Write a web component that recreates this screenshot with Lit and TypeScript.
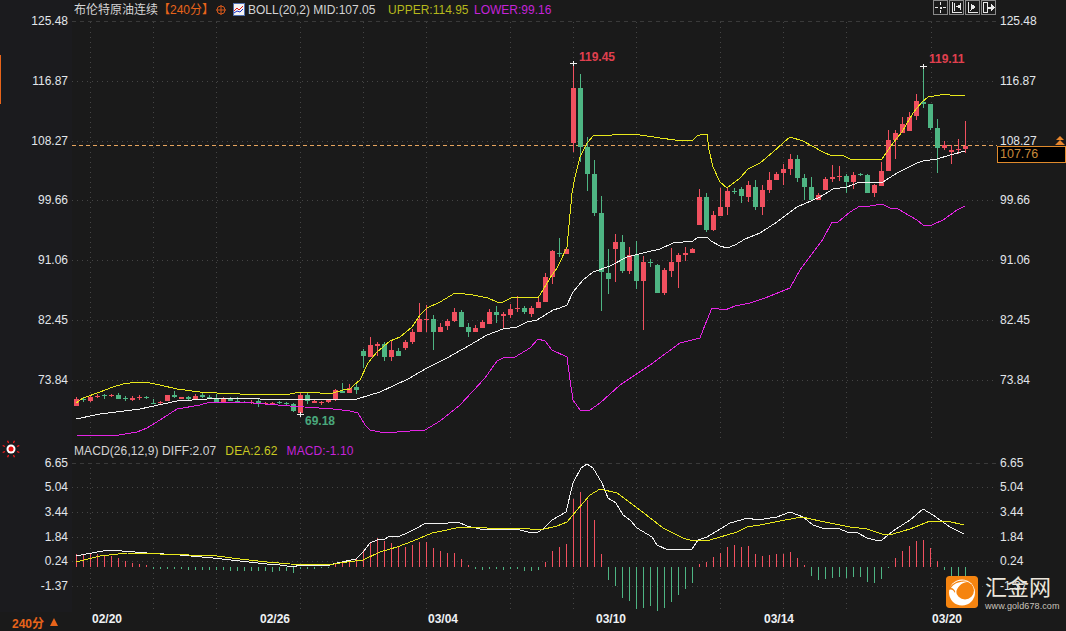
import { LitElement, html, css, svg } from "lit";
import { customElement } from "lit/decorators.js";

type C = number[];
const early: C[] = [
  [57,77,50,77,1],[57,60,52,65,0],[50,62,45,66,1],[47,49,43,54,1],[45,48,43,58,0],[46,48,42,52,1],[46,57,38,57,0],[53,58,48,62,0],[53,59,47,62,1],[50,52,44,59,1],
  [50,54,47,57,0],[70,72,57,72,0],[65,70,62,71,1],[46,62,45,63,1],[45,52,33,55,0],[52,58,50,58,1],[52,57,48,60,0],[48,58,42,60,1],[45,52,37,55,0],[50,53,45,58,0],
  [53,66,42,68,0],[56,66,52,67,1],[56,62,50,64,0],[62,65,52,68,0],[65,68,62,70,0],[65,70,60,72,1],[62,72,58,80,0],[68,71,65,73,1],[68,70,66,72,1],[67,69,63,72,0],
  [68,70,65,75,0],[72,94,68,96,0],[45,100,40,105,1],[45,64,40,73,0],[62,68,60,69,1],[67,70,62,75,1],[60,67,58,68,1],[30,60,26,62,1],[32,38,10,40,0],[25,38,12,40,1],
].map((c) => [380 + c[0] / 3, 380 + c[1] / 3, 380 + c[2] / 3, 380 + c[3] / 3, c[4]]);

const rest: C[] = [
  [387,390,384,394,0],[351,356,349,368,0],[345,357,337,357,1],[344,346,342,356,1],[344,357,342,361,0],[350,357,341,361,1],[351,356,348,356,0],[342,348,340,350,1],[332,342,329,344,1],[319,332,303,332,1],
  [319,320,305,332,1],[319,332,315,350,0],[327,332,323,332,1],[321,326,319,330,1],[312,321,308,322,1],[312,327,310,327,0],[327,332,323,337,0],[328,332,325,332,1],[322,328,320,328,1],[312,324,309,324,1],
  [312,315,306,323,0],[314,316,312,328,1],[309,315,304,318,1],[308,309,296,312,1],[308,312,306,314,0],[308,314,306,317,1],[302,308,296,308,1],[277,302,273,302,1],[251,277,250,284,1],[253,254,238,257,0],
  [249,254,249,254,1],[88,143,64,152,1],[88,147,74,162,0],[147,174,137,191,0],[174,213,160,216,0],[213,272,196,311,0],[273,279,249,294,0],[242,249,234,282,1],[242,271,235,273,0],[255,271,247,274,1],
  [255,281,241,289,0],[262,281,256,330,1],[262,263,259,267,0],[265,293,264,293,0],[270,293,268,295,1],[262,271,248,277,1],[255,262,253,288,1],[253,255,247,261,1],[249,253,248,253,1],[197,225,189,225,1],
  [197,230,193,232,0],[215,230,211,231,1],[207,216,188,216,1],[191,207,187,215,1],[191,192,188,194,0],[189,196,187,203,0],[185,197,181,202,1],[187,207,180,210,0],[190,207,185,215,1],[180,190,172,193,1],
  [174,180,172,180,1],[169,173,164,185,1],[159,169,154,175,1],[159,178,155,182,0],[178,187,174,200,0],[187,200,177,201,0],[195,200,193,200,1],[179,190,177,190,1],[177,179,165,182,1],[176,177,166,181,1],
  [176,182,174,193,0],[175,182,172,189,1],[174,175,173,176,0],[175,193,174,193,0],[185,193,184,197,1],[171,186,162,186,1],[140,171,130,171,1],[133,140,130,159,1],[124,133,117,133,1],[117,131,112,131,1],
  [101,116,94,120,1],[102,104,66,108,0],[104,128,104,130,0],[128,148,119,173,0],[145,148,141,150,1],[150,152,145,164,1],[149,150,139,154,1],[146,149,121,153,1],
];
const candles = [...early, ...rest];

const upper = "76,403 83,398 100,392 113,387 123,384 137,382 150,383 160,385 177,389 200,392 217,393 240,394 267,395 290,394 300,392 320,393 333,393 343,390 350,389 353,386 360,380 368,363 377,352 390,341 400,337 412,327 420,315 427,308 440,302 455,293 465,294 473,295 488,298 497,302 503,302 513,297 523,297 538,298 543,290 550,278 557,268 560,262 567,247 572,193 575,177 580,157 587,143 594,135 612,135 613,134 633,134 647,136 660,138 675,140 693,140 697,136 703,134 707,134 709,150 713,167 720,182 727,188 740,178 748,169 760,163 773,152 783,143 790,137 803,141 823,152 832,156 842,155 850,159 882,159 893,143 902,132 913,113 922,102 928,97 940,95 947,94 950,95 965,95";
const mid = "76,419 100,414 140,409 163,404 177,401 207,399 233,398 260,399 287,399 333,400 357,399 380,392 408,379 427,368 447,358 470,345 487,335 503,329 517,327 527,322 537,320 553,310 560,308 567,305 573,292 583,280 593,272 610,266 627,257 647,252 660,249 673,243 693,241 697,238 707,237 711,241 720,246 727,248 735,245 745,239 760,233 777,222 797,207 820,197 833,189 847,187 860,182 883,182 897,173 917,163 923,161 937,159 950,155 965,151";
const lower = "76,435 113,436 137,432 147,428 160,420 177,409 200,405 210,402 240,402 290,406 333,409 350,411 358,413 365,425 370,430 385,433 410,431 425,430 440,421 460,405 485,378 497,361 503,358 515,357 530,348 538,339 545,341 552,350 567,357 570,380 573,400 580,410 590,410 600,403 620,385 650,365 680,343 700,338 705,325 712,308 725,310 735,306 750,303 765,298 790,288 800,270 815,250 823,239 832,222 838,222 850,212 860,206 870,206 882,204 890,208 898,209 917,220 923,225 932,225 943,220 957,210 965,206";
const diff = "76,556 97,552 110,550 147,553 180,555 213,558 240,561 267,564 280,565 293,567 300,565 330,565 337,563 356,559 363,552 370,543 377,540 385,539 390,536 400,536 407,533 417,528 426,523 448,523 453,522 458,522 467,526 480,529 493,529 520,530 528,532 538,532 543,529 552,520 566,512 573,483 581,468 587,464 593,468 602,483 608,498 616,503 623,515 630,520 637,528 652,537 657,545 668,550 692,549 698,540 707,537 730,523 748,518 757,520 777,517 790,512 803,517 813,525 822,528 840,529 847,532 858,533 867,538 875,540 882,540 893,531 910,520 923,509 933,515 950,527 964,534";
const dea = "76,562 100,556 127,553 160,554 217,556 240,559 267,562 290,564 327,565 347,562 363,560 380,552 397,547 413,541 432,533 447,530 460,527 470,527 487,528 520,528 540,530 557,526 567,522 577,510 590,495 600,489 617,493 640,510 663,528 683,538 693,541 710,540 737,532 747,527 760,525 780,521 802,517 820,521 850,527 867,529 882,534 893,534 910,529 930,521 947,521 964,525";

const macd = [
  554,554,553,554,555,556,558,561,563,564,565,
  569,569,569,569,569,570,570,570,570,570,570,571,571,571,571,571,571,572,571,
  571,573,569,569,569,568,568,
  563,562,561,559,550,542,538,541,543,547,547,545,542,542,548,551,553,553,559,565,
  569,570,569,569,570,569,569,571,571,570,
  562,551,547,544,499,492,500,520,554,
  580,586,598,601,609,608,606,611,608,602,595,589,583,
  564,562,557,553,547,545,547,546,554,556,555,554,554,552,558,565,
  576,580,579,578,577,578,577,577,582,583,579,568,
  558,551,546,541,540,548,561,
  570,577,577,577,
];

const RED = "#f0505f";
const GREEN = "#4eb583";
const ZERO = 566;
const px = (i: number) => 76 + 7 * i;

const priceLabels: [string, number][] = [["125.48",21],["116.87",81],["108.27",141],["99.66",200],["91.06",260],["82.45",320],["73.84",380]];
const macdLabels: [string, number][] = [["6.65",463],["5.04",487],["3.44",512],["1.84",537],["0.24",561],["-1.37",586]];
const verticals = [90,153,216,300,363,426,510,573,636,720,783,846,931];
const dates: [string, number][] = [["02/20",107],["02/26",275],["03/04",443],["03/10",611],["03/14",779],["03/20",947]];
const crosses: [number, number][] = [[573,63],[923,66],[300,414]];

@customElement("app-root")
export class AppRoot extends LitElement {
  static styles = css`
    :host {
      display: block;
      width: 1066px;
      height: 631px;
      overflow: hidden;
      background: #1a1a1a;
      font-family: "Liberation Sans", "Noto Sans CJK SC", sans-serif;
      font-size: 12px;
      color: #d4d4d4;
    }
    .chart { position: relative; height: 612px; }
    .plot { display: block; }
    .axis { font-size: 12px; fill: #e2e6ea; }
    .extreme { font-size: 12px; font-weight: 700; }
    .line { fill: none; stroke-width: 1; shape-rendering: crispEdges; }
    .crisp { shape-rendering: crispEdges; }
    .legend {
      position: absolute;
      display: flex;
      align-items: center;
      white-space: nowrap;
      line-height: 16px;
      left: 74px;
    }
    .legend.price { top: 2px; }
    .legend.osc { top: 443px; gap: 9px; letter-spacing: 0.1px; }
    .title { width: 84px; }
    .period { color: #e8641a; margin-left: 0; width: 56px; }
    .target { margin-left: 2px; }
    .boll-icon { margin: -2px 3px 0 7px; }
    .mid { width: 131px; }
    .up { color: #b5b81c; margin-left: 9px; width: 77px; }
    .down { color: #c424d8; margin-left: 9px; }
    .dea { color: #c9c922; }
    .m { color: #c424d8; }
    .rail {
      position: absolute;
      left: 0;
      top: 55px;
      width: 1px;
      height: 49px;
      background: #e8641a;
    }
    .pulse { position: absolute; left: 1px; top: 439px; }
    .tools { position: absolute; left: 933px; top: 0; display: flex; gap: 1px; }
    .tool {
      width: 13px;
      height: 13px;
      border: 1px solid #8a8a8a;
      background: #1c1c1c;
      display: flex;
    }
    .tag {
      position: absolute;
      left: 997px;
      top: 146px;
      width: 65px;
      height: 15px;
      border: 1px solid #e08a2c;
      background: #000;
      color: #c98a3c;
      font-size: 12.5px;
      line-height: 15px;
      padding-left: 2px;
      box-sizing: content-box;
    }
    .tag-arrow { position: absolute; left: 1054px; top: 136px; }
    .logo {
      position: absolute;
      left: 946px;
      top: 576px;
      display: flex;
      gap: 7px;
    }
    .logo-mark { border-radius: 3px; display: block; }
    .logo-text { display: flex; flex-direction: column; }
    .logo-name {
      font-size: 22px;
      line-height: 24px;
      color: #ebe6dc;
      white-space: nowrap;
      font-weight: 400;
    }
    .logo-url { font-size: 9px; line-height: 10px; margin-top: 1px; color: #c9c4bc; letter-spacing: 0.1px; }
    .footer {
      height: 19px;
      display: grid;
      grid-template-columns: 72px 1fr;
      box-sizing: border-box;
    }
    .period-switch {
      display: flex;
      align-items: center;
      gap: 6px;
      padding-left: 12px;
      color: #e8641a;
      font-weight: 700;
      margin-top: 1px;
    }
    .tri { width: 0; height: 0; border: 4.5px solid transparent; border-top: 0; border-bottom: 8px solid #e8641a; }
    .ticks { position: relative; }
    .tick { position: absolute; top: -1px; transform: translateX(-50%); font-weight: 700; color: #eef1f4; line-height: 16px; }
  `;

  private plot() {
    return svg`<svg class="plot" width="1066" height="612" viewBox="0 0 1066 612">
      <rect x="0" y="0" width="72" height="612" fill="#1b1b1e"></rect>
      ${verticals.map((x) => svg`
        <line x1=${x + 0.5} x2=${x + 0.5} y1="22" y2="442" stroke="#454545" stroke-dasharray="1 4" class="crisp"></line>
        <line x1=${x + 0.5} x2=${x + 0.5} y1="463" y2="612" stroke="#454545" stroke-dasharray="1 4" class="crisp"></line>`)}
      ${priceLabels.map(([_, y], i) => svg`<line x1="72" x2="996" y1=${y + 0.5} y2=${y + 0.5} stroke=${i ? "#454545" : "#3a3a3a"} stroke-dasharray=${i ? "1 4" : "4 4"} class="crisp"></line>`)}
      ${macdLabels.map(([_, y], i) => svg`<line x1="72" x2="996" y1=${y + 0.5} y2=${y + 0.5} stroke=${i ? "#454545" : "#3a3a3a"} stroke-dasharray=${i ? "1 4" : "4 4"} class="crisp"></line>`)}
      ${priceLabels.map(([t, y]) => svg`
        <text class="axis" x="68" y=${y + 4} text-anchor="end">${t}</text>
        <text class="axis" x="1000" y=${y + 4}>${t}</text>`)}
      ${macdLabels.map(([t, y]) => svg`
        <text class="axis" x="68" y=${y + 4} text-anchor="end">${t}</text>
        <text class="axis" x="1000" y=${y + 4}>${t}</text>`)}

      <line x1="72" x2="997" y1="145.5" y2="145.5" stroke="#e6a45e" stroke-dasharray="4 3" class="crisp"></line>

      ${candles.map((c, i) => {
        const col = c[4] ? RED : GREEN;
        const x = px(i);
        return svg`
          <rect class="crisp" x=${x} y=${Math.round(c[2])} width="1" height=${Math.max(1, Math.round(c[3]) - Math.round(c[2]))} fill=${col}></rect>
          <rect class="crisp" x=${x - 2} y=${Math.round(c[0])} width="5" height=${Math.max(1, Math.round(c[1]) - Math.round(c[0]))} fill=${col}></rect>`;
      })}
      <polyline class="line" points=${upper} stroke="#e8e81c"></polyline>
      <polyline class="line" points=${mid} stroke="#f2f2f2"></polyline>
      <polyline class="line" points=${lower} stroke="#e424e4"></polyline>

      ${crosses.map(([x, y]) => svg`
        <rect class="crisp" x=${x - 3} y=${y} width="7" height="1" fill="#f0f0f0"></rect>
        <rect class="crisp" x=${x} y=${y - 2} width="1" height="5" fill="#f0f0f0"></rect>`)}
      <text class="extreme" x="579" y="61" fill="#e0404f">119.45</text>
      <text class="extreme" x="929" y="63" fill="#e0404f">119.11</text>
      <text class="extreme" x="305" y="425" fill="#4aa87c">69.18</text>

      ${macd.map((y, i) => {
        const up = y < ZERO;
        return svg`<rect class="crisp" x=${px(i)} y=${up ? y : ZERO + 1} width="1" height=${up ? ZERO + 1 - y : y - ZERO - 1} fill=${up ? RED : GREEN}></rect>`;
      })}
      <polyline class="line" points=${diff} stroke="#f2f2f2"></polyline>
      <polyline class="line" points=${dea} stroke="#e8e81c"></polyline>
    </svg>`;
  }

  private toolIcon(n: number) {
    const s = "#e8e8e8";
    const paths = [
      svg`<path d="M6.5 1v3M6.5 9v3M1 6.5h3M9 6.5h3M6 6h1v1H6z" stroke=${s} fill="none"></path>`,
      svg`<path d="M2.5 1v10.5H12M4.5 2v8M10.5 2v7" stroke=${s} fill="none"></path><path d="M9.5 3.5v4L6 5.5z" fill=${s}></path>`,
      svg`<path d="M2.5 1v10.5H12" stroke=${s} fill="none"></path><path d="M4.5 2.5v7L10 6z" fill=${s}></path>`,
      svg`<path d="M1.5 1.5h4v10h-4z" stroke=${s} fill="none"></path><path d="M6 5.5h3V3l3.5 3.5L9 10V7.5H6z" fill=${s}></path>`,
    ];
    return html`<div class="tool"><svg width="13" height="13" viewBox="0 0 13 13" class="crisp">${paths[n]}</svg></div>`;
  }

  render() {
    const burst = Array.from({ length: 8 }, (_, k) => {
      const a = (k * Math.PI) / 4 + Math.PI / 8;
      return svg`<line x1=${10 + 6.5 * Math.cos(a)} y1=${10 + 6.5 * Math.sin(a)} x2=${10 + 9 * Math.cos(a)} y2=${10 + 9 * Math.sin(a)} stroke="#ff1c1c" stroke-width="1.2"></line>`;
    });
    return html`
      <div class="chart">
        ${this.plot()}
        <div class="rail"></div>
        <div class="legend price">
          <span class="title">布伦特原油连续</span>
          <span class="period">【240分】</span>
          <svg class="target" width="10" height="10" viewBox="0 0 10 10" fill="none" stroke="#d8581a"><circle cx="5" cy="5" r="4"></circle><path d="M0 5h10M5 0v10"></path></svg>
          <svg class="boll-icon" width="12" height="13" viewBox="0 0 12 13">
            <rect x="0.5" y="0.5" width="11" height="12" fill="#f4f4f4" stroke="#5070b0"></rect>
            <path d="M1 8l3-3 2 2 4-4" stroke="#e01818" fill="none"></path>
            <path d="M1 10l3-2 3 1 3-3" stroke="#1830c8" fill="none"></path>
          </svg>
          <span class="mid">BOLL(20,2) MID:107.05</span>
          <span class="up">UPPER:114.95</span>
          <span class="down">LOWER:99.16</span>
        </div>
        <svg class="pulse" width="20" height="20" viewBox="0 0 20 20">
          ${burst}
          <circle cx="10" cy="10" r="4.5" fill="#fff"></circle>
          <circle cx="10" cy="10" r="2.5" fill="#e01010"></circle>
        </svg>
        <div class="legend osc">
          <span>MACD(26,12,9) DIFF:2.07</span>
          <span class="dea">DEA:2.62</span>
          <span class="m">MACD:-1.10</span>
        </div>
        <div class="tools">${[0, 1, 2, 3].map((n) => this.toolIcon(n))}</div>
        <svg class="tag-arrow" width="12" height="10" viewBox="0 0 12 10" fill="#e8862c"><path d="M6 0l4 4H2zM6 4l5 5H1z"></path></svg>
        <div class="tag">107.76</div>
        <div class="logo">
          <svg class="logo-mark" width="32" height="32" viewBox="0 0 32 32">
            <rect width="32" height="32" rx="3" fill="#f58410"></rect>
            <circle cx="16" cy="16.5" r="13" fill="#fff"></circle>
            <circle cx="19" cy="14.5" r="9" fill="#f58410"></circle>
            <path d="M2 14C6 6 14 3 22 5 15 5 10 9 9 17 7 13 5 13 2 14z" fill="#f58410"></path>
            <path d="M5 12C8 7 14 5 21 6 15 7 11 11 10 17 9 14 7 12 5 12z" fill="#fff"></path>
          </svg>
          <div class="logo-text">
            <span class="logo-name">汇金网</span>
            <span class="logo-url">www.gold678.com</span>
          </div>
        </div>
      </div>
      <div class="footer">
        <div class="period-switch"><span>240分</span><span class="tri"></span></div>
        <div class="ticks">
          ${dates.map(([t, x]) => html`<span class="tick" style="left:${x - 72}px">${t}</span>`)}
        </div>
      </div>
    `;
  }
}
